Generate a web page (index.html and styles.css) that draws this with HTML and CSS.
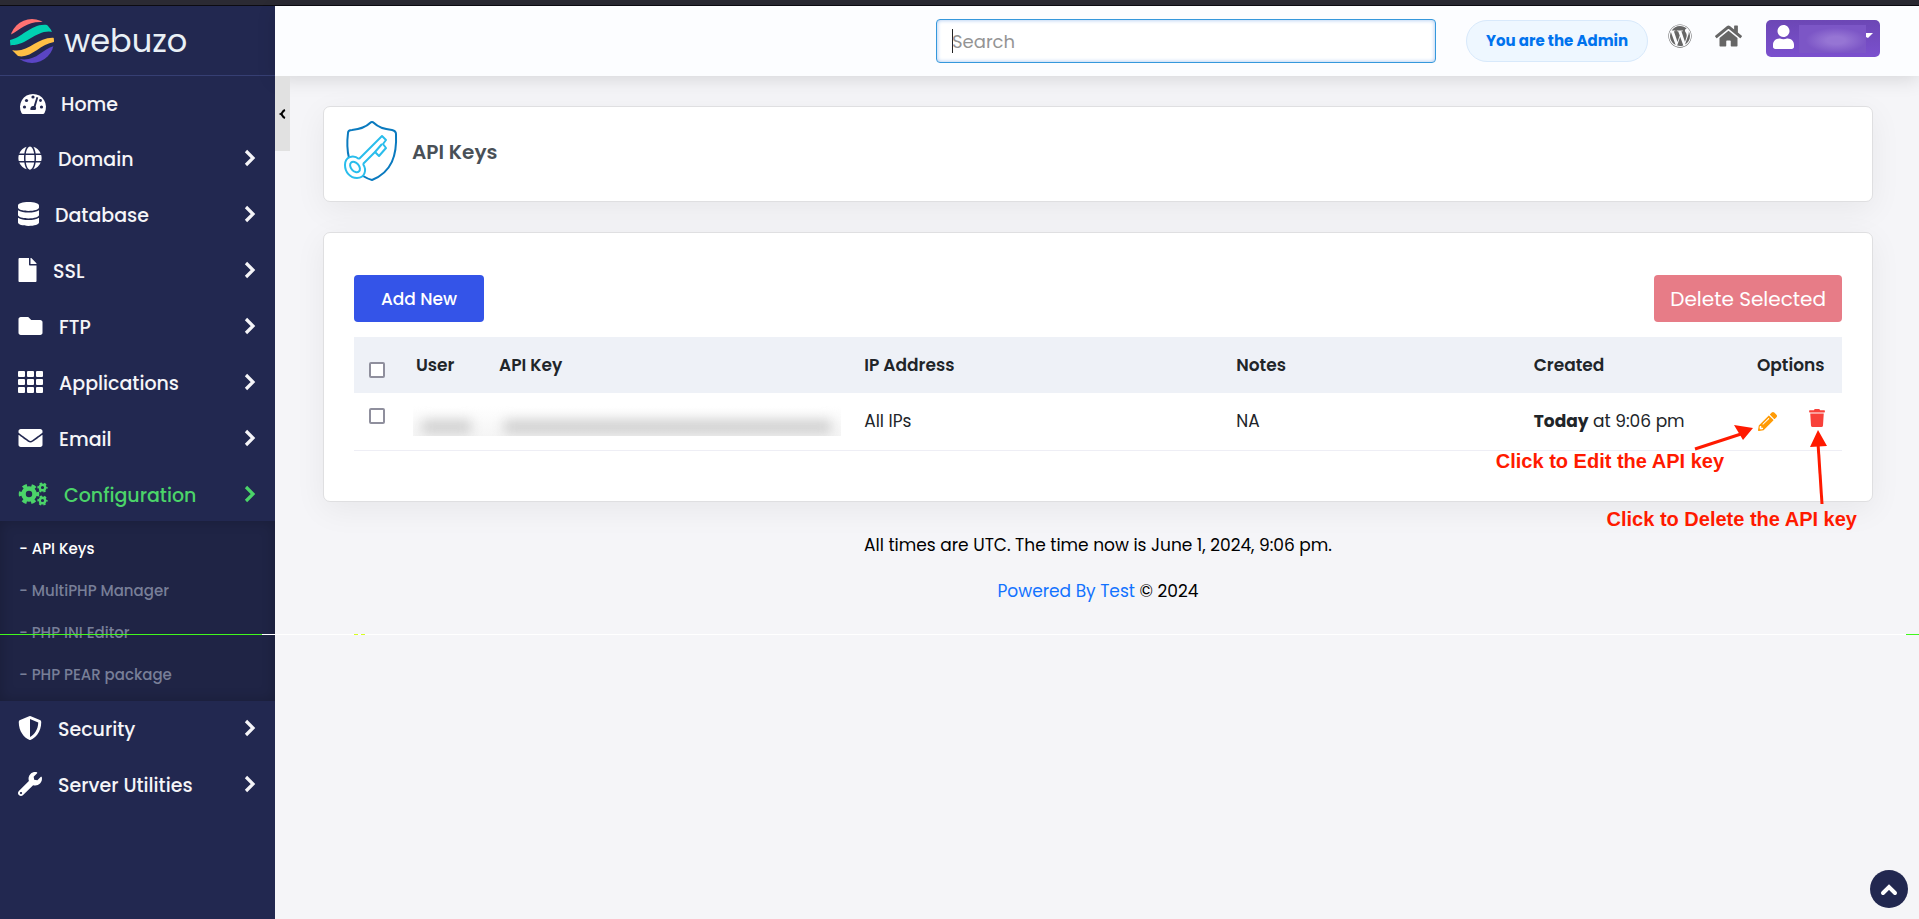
FILE: index.html
```
<!DOCTYPE html>
<html lang="en">
<head>
<meta charset="utf-8">
<title>API Keys</title>
<link rel="stylesheet" href="styles.css">
</head>
<body>
<svg class="defs" aria-hidden="true">
  <symbol id="chev" viewBox="0 0 12 18"><path d="M2 2l7 7-7 7" fill="none" stroke="currentColor" stroke-width="3.2"/></symbol>
  <symbol id="gear" viewBox="-12 -12 24 24">
    <g fill="none" stroke="currentColor"><circle r="6" stroke-width="5"/><circle r="9.2" stroke-width="4" stroke-dasharray="4.8 4.83" stroke-dashoffset="2.4"/></g>
  </symbol>
</svg>
<div class="top-strip"></div>
<div class="app">
  <aside class="sidebar">
    <a class="brand" href="#">
      <svg class="brand-mark" viewBox="0 0 44 44" aria-hidden="true">
        <defs><clipPath id="disc"><circle cx="22" cy="22" r="22"/></clipPath></defs>
        <g clip-path="url(#disc)">
          <path d="M0 16C11 10 17 2 33 3L30-2H0z" fill="#ff7272"/>
          <path d="M-1 21C11 20 22 3 38 6L44 13C27 9 18 26 2 26L-1 27z" fill="#00d1b2"/>
          <path d="M2 31C18 35 28 17 45 19L44 23C30 25 21 40 8 37z" fill="#ffc045"/>
          <path d="M9 40C26 43 31 31 44 27V46H9z" fill="#5a45c4"/>
        </g>
      </svg>
      <span>webuzo</span>
    </a>
    <nav class="nav">
      <a class="item first" href="#"><svg width="28" height="22" viewBox="0 0 28 22"><path fill="#fff" d="M2.500 21A13 13 0 1 1 25.500 21Q25 22 24 22H4Q3 22 2.500 21z"/><g fill="#222850"><circle cx="5.500" cy="15" r="1.600"/><circle cx="7.500" cy="8.500" r="1.600"/><circle cx="14" cy="5" r="1.600"/><circle cx="22.500" cy="15" r="1.600"/><circle cx="21.500" cy="8.500" r="1.400"/><path d="M17.500 5l1.700.6-2.600 9A3 3 0 0 1 16.500 18h-5a3 3 0 0 1 3.200-4z"/></g></svg><span>Home</span></a>
      <a class="item" href="#"><svg width="24" height="24" viewBox="0 0 496 512"><path fill="currentColor" d="M336.5 160C322 70.7 287.8 8 248 8s-74 62.7-88.5 152h177zM152 256c0 22.2 1.2 43.5 3.3 64h185.3c2.100-20.500 3.300-41.800 3.300-64s-1.200-43.500-3.300-64H155.300c-2.100 20.500-3.300 41.800-3.300 64zm324.700-96c-28.600-67.900-86.500-120.400-158-141.600 24.400 33.800 41.200 84.700 50 141.600h108zM177.200 18.400C105.800 39.600 47.800 92.100 19.300 160h108c8.700-56.900 25.500-107.800 49.900-141.600zM487.400 192H372.700c2.100 21 3.300 42.500 3.300 64s-1.200 43-3.300 64h114.600c5.500-20.500 8.600-41.800 8.600-64s-3.100-43.500-8.500-64zM120 256c0-21.500 1.200-43 3.300-64H8.600C3.200 212.500 0 233.800 0 256s3.200 43.500 8.600 64h114.600c-2-21-3.200-42.500-3.200-64zm39.500 96c14.500 89.300 48.700 152 88.500 152s74-62.700 88.500-152h-177zm159.300 141.600c71.400-21.200 129.400-73.700 158-141.600h-108c-8.800 56.900-25.600 107.800-50 141.600zM19.300 352c28.600 67.900 86.500 120.400 158 141.600-24.400-33.800-41.200-84.700-50-141.600h-108z"/></svg><span>Domain</span><svg class="arrow"><use href="#chev"/></svg></a>
      <a class="item" href="#"><svg width="21" height="24" viewBox="0 0 448 512"><path fill="currentColor" d="M448 73.143v45.714C448 159.143 347.667 192 224 192S0 159.143 0 118.857V73.143C0 32.857 100.333 0 224 0s224 32.857 224 73.143zM448 176v102.857C448 319.143 347.667 352 224 352S0 319.143 0 278.857V176c48.125 33.143 136.208 48.572 224 48.572S399.874 209.143 448 176zm0 160v102.857C448 479.143 347.667 512 224 512S0 479.143 0 438.857V336c48.125 33.143 136.208 48.572 224 48.572S399.874 369.143 448 336z"/></svg><span>Database</span><svg class="arrow"><use href="#chev"/></svg></a>
      <a class="item" href="#"><svg width="19" height="24" viewBox="0 0 384 512"><path fill="currentColor" d="M224 136V0H24C10.7 0 0 10.7 0 24v464c0 13.300 10.700 24 24 24h336c13.300 0 24-10.700 24-24V160H248c-13.200 0-24-10.800-24-24zm160-14.100v6.100H256V0h6.100c6.400 0 12.500 2.500 17 7l97.900 98c4.500 4.500 7 10.600 7 16.900z"/></svg><span>SSL</span><svg class="arrow"><use href="#chev"/></svg></a>
      <a class="item" href="#"><svg width="25" height="24" viewBox="0 0 512 512"><path fill="currentColor" d="M464 128H272l-64-64H48C21.490 64 0 85.490 0 112v288c0 26.510 21.490 48 48 48h416c26.510 0 48-21.490 48-48V176c0-26.510-21.490-48-48-48z"/></svg><span>FTP</span><svg class="arrow"><use href="#chev"/></svg></a>
      <a class="item" href="#"><svg width="25" height="22" viewBox="0 0 25 22"><g fill="currentColor"><rect width="7" height="6" rx="1"/><rect x="9" width="7" height="6" rx="1"/><rect x="18" width="7" height="6" rx="1"/><rect y="8" width="7" height="6" rx="1"/><rect x="9" y="8" width="7" height="6" rx="1"/><rect x="18" y="8" width="7" height="6" rx="1"/><rect y="16" width="7" height="6" rx="1"/><rect x="9" y="16" width="7" height="6" rx="1"/><rect x="18" y="16" width="7" height="6" rx="1"/></g></svg><span>Applications</span><svg class="arrow"><use href="#chev"/></svg></a>
      <a class="item" href="#"><svg width="25" height="24" viewBox="0 0 512 512"><path fill="currentColor" d="M502.300 190.800c3.900-3.100 9.700-.2 9.700 4.700V400c0 26.500-21.500 48-48 48H48c-26.500 0-48-21.500-48-48V195.600c0-5 5.700-7.800 9.700-4.700 22.400 17.400 52.100 39.500 154.100 113.600 21.100 15.400 56.700 47.800 92.200 47.600 35.700.3 72-32.800 92.300-47.600 102-74.100 131.600-96.300 154-113.700zM256 320c23.200.4 56.600-29.200 73.400-41.400 132.700-96.300 142.800-104.700 173.400-128.700 5.800-4.500 9.200-11.500 9.200-18.900v-19c0-26.500-21.500-48-48-48H48c-26.500 0-48 21.500-48 48v19c0 7.400 3.400 14.300 9.200 18.900 30.600 23.900 40.700 32.400 173.400 128.700 16.800 12.200 50.200 41.800 73.400 41.400z"/></svg><span>Email</span><svg class="arrow"><use href="#chev"/></svg></a>
      <a class="item active" href="#"><svg width="30" height="24" viewBox="0 0 30 24"><use href="#gear" x="0" y="1" width="22" height="22"/><use href="#gear" x="19" y="0" width="11" height="11"/><use href="#gear" x="19" y="13" width="11" height="11"/></svg><span>Configuration</span><svg class="arrow"><use href="#chev"/></svg></a>
      <div class="sub">
        <a class="current" href="#">- API Keys</a>
        <a href="#">- MultiPHP Manager</a>
        <a href="#">- PHP INI Editor</a>
        <a href="#">- PHP PEAR package</a>
      </div>
      <a class="item" href="#"><svg width="24" height="24" viewBox="0 0 512 512"><path fill="currentColor" d="M466.500 83.700l-192-80a48.150 48.150 0 0 0-36.900 0l-192 80C27.700 91.100 16 108.600 16 128c0 198.500 114.500 335.700 221.500 380.300 11.800 4.900 25.100 4.900 36.900 0C360.100 472.600 496 349.300 496 128c0-19.400-11.700-36.900-29.500-44.300zM256.100 446.300l-.1-381 175.900 73.300c-3.300 151.400-82.100 261.100-175.800 307.700z"/></svg><span>Security</span><svg class="arrow"><use href="#chev"/></svg></a>
      <a class="item" href="#"><svg width="24" height="24" viewBox="0 0 512 512"><path fill="currentColor" d="M507.730 109.100c-2.240-9.030-13.540-12.090-20.120-5.510l-74.360 74.360-67.880-11.310-11.310-67.880 74.360-74.360c6.620-6.620 3.430-17.900-5.660-20.160-47.380-11.740-99.550.91-136.580 37.930-39.640 39.640-50.550 97.100-34.050 147.200L18.740 402.760c-24.990 24.990-24.990 65.510 0 90.500 24.990 24.990 65.510 24.990 90.500 0l213.210-213.210c50.120 16.710 107.470 5.680 147.370-34.220 37.070-37.070 49.700-89.320 37.910-136.730zM64 472c-13.250 0-24-10.750-24-24 0-13.260 10.750-24 24-24s24 10.740 24 24c0 13.250-10.750 24-24 24z"/></svg><span>Server Utilities</span><svg class="arrow"><use href="#chev"/></svg></a>
    </nav>
  </aside>
  <div class="page">
    <header class="header">
      <input class="search" type="text" placeholder="Search" aria-label="Search">
      <span class="role">You are the Admin</span>
      <a class="tool wp" href="#" aria-label="WordPress"><svg width="24" height="24" viewBox="0 0 512 512"><path fill="currentColor" d="M61.700 169.400l101.500 278C92.200 413 43.300 340.200 43.300 256c0-30.900 6.600-60.100 18.400-86.600zm337.900 75.900c0-26.300-9.400-44.500-17.500-58.700-10.800-17.500-20.900-32.400-20.900-49.900 0-19.600 14.800-37.800 35.700-37.800.9 0 1.800.1 2.800.2-37.900-34.700-88.300-55.900-143.700-55.900-74.300 0-139.700 38.100-177.800 95.900 5 .2 9.700.3 13.700.3 22.200 0 56.700-2.700 56.700-2.700 11.500-.7 12.800 16.200 1.400 17.500 0 0-11.500 1.300-24.300 2l77.500 230.400L249.800 247l-33.100-90.800c-11.500-.7-22.300-2-22.300-2-11.500-.7-10.100-18.200 1.300-17.500 0 0 35.100 2.700 56 2.700 22.200 0 56.700-2.700 56.700-2.700 11.500-.7 12.800 16.200 1.400 17.500 0 0-11.500 1.300-24.300 2l76.900 228.700 21.200-70.900c9-29.400 16-50.500 16-68.700zm-139.900 29.300l-63.800 185.500c19.100 5.600 39.200 8.700 60.100 8.700 24.800 0 48.500-4.300 70.600-12.100-.6-.9-1.100-1.900-1.500-2.900l-65.400-179.200zm183-120.700c.9 6.800 1.400 14 1.400 21.900 0 21.600-4 45.800-16.200 76.200l-65 187.900C426.200 403 468.700 334.500 468.700 256c0-37-9.400-71.800-26-102.100zM504 256c0 136.800-111.300 248-248 248C119.200 504 8 392.700 8 256 8 119.200 119.200 8 256 8c136.700 0 248 111.200 248 248zm-11.400 0c0-130.500-106.200-236.600-236.600-236.600C125.500 19.400 19.400 125.500 19.400 256S125.600 492.600 256 492.600c130.500 0 236.600-106.100 236.600-236.600z"/></svg></a>
      <a class="tool" href="#" aria-label="Home"><svg width="27" height="24" viewBox="0 0 576 512"><path fill="currentColor" d="M280.370 148.260L96 300.110V464a16 16 0 0 0 16 16l112.060-.29a16 16 0 0 0 15.920-16V368a16 16 0 0 1 16-16h64a16 16 0 0 1 16 16v95.640a16 16 0 0 0 16 16.050L464 480a16 16 0 0 0 16-16V300L295.670 148.260a12.190 12.190 0 0 0-15.300 0zM571.600 251.470L488 182.560V44.050a12 12 0 0 0-12-12h-56a12 12 0 0 0-12 12v72.610L318.470 43a48 48 0 0 0-61 0L4.340 251.470a12 12 0 0 0-1.600 16.900l25.500 31A12 12 0 0 0 45.150 301l235.220-193.740a12.190 12.190 0 0 1 15.300 0L530.900 301a12 12 0 0 0 16.900-1.600l25.500-31a12 12 0 0 0-1.700-16.930z"/></svg></a>
      <button class="account" type="button" aria-label="Account"><svg width="21" height="24" viewBox="0 0 448 512"><path fill="#fff" d="M224 256c70.700 0 128-57.300 128-128S294.700 0 224 0 96 57.300 96 128s57.300 128 128 128zm89.600 32h-16.700c-22.200 10.200-46.900 16-72.900 16s-50.600-5.800-72.900-16h-16.700C60.200 288 0 348.200 0 422.400V464c0 26.500 21.500 48 48 48h352c26.500 0 48-21.500 48-48v-41.600c0-74.200-60.200-134.400-134.400-134.400z"/></svg><span class="account-name"></span><svg class="caret" width="7" height="5" viewBox="0 0 7 5"><path d="M0 0h7L2 5 0 4z" fill="#fff"/></svg></button>
    </header>
    <button class="collapse" type="button" aria-label="Collapse menu"><svg width="6" height="10" viewBox="0 0 6 10"><path d="M5 1C2 2 3 4 1 5c2 1 1 3 4 4" fill="none" stroke="#000" stroke-width="2"/></svg></button>
    <main class="main">
      <section class="card title-card">
        <svg width="53" height="60" viewBox="0 0 53 60" aria-hidden="true">
          <g fill="none" stroke-width="2" stroke-linejoin="round">
            <path d="M5 37C3 29 3 20 4 12Q4 9 8 9C17 8 22 6 26 2Q28 0 30 2C34 6 38 8 48 9Q52 10 52 13C53 34 48 51 28 59Q24 58 19 55" stroke="#0a7abf"/>
            <g stroke="#29bdec"><path d="M15 38L38 15l4 4-3 4 3 4-7 8-4-4-12 12"/><path d="M31 31l7-8M19 43c4 6 2 14-6 14C6 57 1 51 1 44c0-8 8-11 14-6"/><ellipse cx="11" cy="46" rx="4" ry="6" transform="rotate(-40 11 46)"/></g>
          </g>
        </svg>
        <h1>API Keys</h1>
      </section>
      <section class="card list-card">
        <div class="actions">
          <button class="btn add" type="button">Add New</button>
          <button class="btn delete" type="button">Delete Selected</button>
        </div>
        <table class="keys">
          <colgroup><col class="c-check"><col class="c-user"><col class="c-key"><col class="c-ip"><col class="c-notes"><col class="c-created"><col class="c-options"></colgroup>
          <thead><tr><th class="pick"><input type="checkbox" aria-label="Select all"></th><th>User</th><th>API Key</th><th>IP Address</th><th>Notes</th><th>Created</th><th>Options</th></tr></thead>
          <tbody><tr>
            <td class="pick"><input type="checkbox" aria-label="Select key"></td>
            <td colspan="2" class="masked"><div class="mask"><i class="smudge user"></i><i class="smudge key"></i></div></td>
            <td>All IPs</td><td>NA</td><td><b>Today</b> at 9:06 pm</td>
            <td><div class="options">
              <a class="edit" href="#" aria-label="Edit"><svg width="19" height="19" viewBox="0 0 512 512"><path fill="currentColor" d="M497.900 142.100l-46.100 46.100c-4.700 4.700-12.300 4.700-17 0l-111-111c-4.700-4.700-4.700-12.300 0-17l46.100-46.100c18.700-18.700 49.100-18.700 67.900 0l60.100 60.100c18.800 18.700 18.800 49.100 0 67.900zM284.200 99.800L21.600 362.400.4 483.900c-2.900 16.400 11.400 30.600 27.800 27.800l121.500-21.300 262.600-262.600c4.700-4.700 4.700-12.300 0-17l-111-111c-4.800-4.700-12.400-4.700-17.100 0zM124.100 339.900c-5.500-5.500-5.500-14.300 0-19.800l154-154c5.500-5.500 14.300-5.500 19.800 0s5.500 14.300 0 19.800l-154 154c-5.500 5.500-14.300 5.500-19.800 0zM88 424h48v36.300l-64.500 11.300-31.100-31.100L51.700 376H88v48z"/></svg></a>
              <a class="remove" href="#" aria-label="Delete"><svg width="16" height="18" viewBox="0 0 448 512"><path fill="currentColor" d="M432 32H312l-9.400-18.700A24 24 0 0 0 281.100 0H166.800a23.720 23.720 0 0 0-21.400 13.300L136 32H16A16 16 0 0 0 0 48v32a16 16 0 0 0 16 16h416a16 16 0 0 0 16-16V48a16 16 0 0 0-16-16zM53.200 467a48 48 0 0 0 47.900 45h245.800a48 48 0 0 0 47.900-45L416 128H32z"/></svg></a>
            </div></td>
          </tr></tbody>
        </table>
        <span class="note note-edit">Click to Edit the API key</span>
        <span class="note note-delete">Click to Delete the API key</span>
        <svg class="pointers" width="140" height="80" viewBox="0 0 140 80" aria-hidden="true"><g stroke="#ff1a00" stroke-width="3" fill="#ff1a00"><path d="M4 20L50 5"/><path d="M131 75L127 14"/><path stroke="none" d="M62-1L43-4l9 15zM127 1l-8 17 17-1z"/></g></svg>
      </section>
      <footer class="footer">
        <p>All times are UTC. The time now is June 1, 2024, 9:06 pm.</p>
        <p><a href="#">Powered By Test</a> © 2024</p>
      </footer>
    </main>
  </div>
</div>
<div class="scanline"></div>
<button class="to-top" type="button" aria-label="Back to top"><svg width="16" height="11" viewBox="0 0 16 11"><path d="M2 9l6-6 6 6" fill="none" stroke="#fff" stroke-width="4" stroke-linecap="round"/></svg></button>
</body>
</html>
```
FILE: styles.css
```
* { box-sizing: border-box; }
body {
  margin: 0;
  min-height: 100vh;
  display: flex;
  flex-direction: column;
  background: #f5f5f8;
  color: #212529;
  font-family: Poppins, Inter, "Open Sans", sans-serif;
  font-size: 17px;
  line-height: 24px;
}
a { color: inherit; text-decoration: none; }
button, input { font: inherit; }
svg { display: block; flex: none; overflow: visible; }
.defs { position: absolute; width: 0; height: 0; }

.top-strip { height: 6px; background: #2b2a33; border-bottom: 1px solid #0c0b12; }
.app { flex: 1; display: flex; }

.sidebar { width: 275px; flex: none; background: #222850; color: #f5f5f8; }
.brand {
  display: flex;
  align-items: center;
  gap: 10px;
  height: 70px;
  padding: 0 10px;
  border-bottom: 1px solid #363f73;
  color: #e9f0f6;
  font-size: 32px;
  line-height: 40px;
}
.brand-mark { width: 44px; height: 44px; }

.nav { font-size: 19px; font-weight: 500; }
.item { display: flex; align-items: center; gap: 16px; height: 56px; padding: 2px 19px 0 18px; }
.item > svg { margin-bottom: 4px; }
.item > svg:first-child { color: #fff; }
.item.first { height: 55px; gap: 14px; padding-left: 19px; }
.item .arrow { width: 12px; height: 18px; margin-left: auto; }
.item.active { height: 54px; padding-top: 4px; }
.item.active, .item.active > svg { color: #4bd469; }
.sub {
  display: grid;
  padding: 7px 19px 5px;
  background: #1f2445;
  box-shadow: inset 0 0 14px rgba(0, 0, 0, .2);
  color: #787f98;
  font-size: 15px;
}
.sub a { padding: 9px 0; }
.sub .current { color: #fff; }

.page { flex: 1; min-width: 0; position: relative; }
.header {
  display: flex;
  align-items: flex-start;
  justify-content: flex-end;
  height: 70px;
  padding: 14px 39px 0 48px;
  background: #fcfdff;
  box-shadow: 0 4px 18px rgba(0, 0, 0, .12);
}
.search {
  width: 500px;
  height: 44px;
  margin: -1px 30px 0 0;
  padding: 0 15px;
  border: 1px solid #3598dc;
  border-radius: 4px;
  background: linear-gradient(#222, #222) 15px 9px / 1px 24px no-repeat #fff;
  box-shadow: inset 0 0 4px #9dc0ee;
  color: #222;
  font-size: 18px;
}
.search::placeholder { color: #949494; opacity: 1; }
.role {
  width: 182px;
  margin-right: 20px;
  padding: 8px 0;
  border: 1px solid #d8e9fb;
  border-radius: 21px;
  background: #eef7ff;
  color: #0073ee;
  text-align: center;
  font-size: 15px;
  font-weight: 700;
}
.tool { margin: 4px 24px 0 0; color: #666; }
.tool.wp { margin-right: 23px; }
.account {
  display: flex;
  align-items: center;
  gap: 5px;
  width: 114px;
  height: 37px;
  padding: 0 7px 4px;
  border: 0;
  border-radius: 5px;
  background: linear-gradient(#6c47b5, #7b50ce);
}
.account-name { width: 68px; height: 28px; margin: 5px -5px 0 0; background: radial-gradient(closest-side at 55% 55%, #9675d4 30%, #7c56c6); }
.caret { margin-bottom: 3px; }

.collapse {
  position: absolute;
  left: 0;
  top: 70px;
  display: grid;
  place-items: center;
  width: 15px;
  height: 75px;
  padding: 0;
  border: 0;
  background: #e1e1e1;
}

.main { padding: 30px 46px 0 48px; }
.card {
  border: 1px solid #dfdfe1;
  border-radius: 7px;
  background: #fff;
  box-shadow: 0 8px 32px rgba(0, 0, 0, .06);
}
.title-card { display: flex; align-items: center; gap: 15px; margin-bottom: 30px; padding: 14px 20px 20px; }
.title-card h1 { margin: 2px 0 0; color: #495057; font-size: 20px; font-weight: 600; line-height: 24px; }
.list-card { position: relative; padding: 42px 30px 50px; }
.actions { display: flex; justify-content: space-between; margin-bottom: 15px; }
.btn { height: 47px; border: 0; border-radius: 4px; color: #fff; }
.add { width: 130px; background: #3454e8; font-weight: 500; }
.delete { padding: 0 16px; background: #e77c87; font-size: 20px; }

.keys { width: 100%; table-layout: fixed; border-collapse: collapse; }
.c-check { width: 50px; }
.c-user { width: 83px; }
.c-ip { width: 25%; }
.c-notes { width: 20%; }
.c-created { width: 15%; }
.c-options { width: 97px; }
.keys th, .keys td { height: 56px; padding: 0 12px; text-align: left; white-space: nowrap; }
.keys thead { background: #eef1f7; }
.keys th { font-weight: 600; }
.keys td { height: 57px; border-bottom: 1px solid #eeeef5; }
.keys .pick { padding: 0 15px; }
.keys input {
  display: block;
  appearance: none;
  width: 16px;
  height: 16px;
  margin: 0;
  border: 2px solid #8f8f9d;
  border-radius: 2px;
  background: #fff;
}
.keys th input { margin-top: 10px; }
.keys td input { margin-bottom: 10px; }
.keys .masked { padding: 0 11px 0 9px; }
.mask { position: relative; height: 30px; overflow: hidden; background: linear-gradient(#fff, #f5f5f5); }
.smudge { position: absolute; top: 14px; height: 14px; background: #d0d0d0; filter: blur(6px); }
.smudge.user { left: 9px; width: 49px; }
.smudge.key { left: 91px; right: 10px; }
.options { display: flex; align-items: center; gap: 32px; padding-left: 1px; }
.edit { color: #ff9b05; }
.remove { margin-bottom: 6px; color: #f8413a; }

.note {
  position: absolute;
  color: #ff1a00;
  font-family: "Liberation Sans", Arial, sans-serif;
  font-size: 20px;
  font-weight: 700;
  white-space: nowrap;
}
.note-edit { right: 148px; bottom: 28px; }
.note-delete { right: 15px; bottom: -30px; }
.pointers { position: absolute; right: 41px; bottom: -8px; }

.footer { padding-top: 31px; text-align: center; color: #000; }
.footer p { margin: 0 0 22px; }
.footer a { color: #1272ff; }

.scanline {
  position: absolute;
  left: 0;
  right: 0;
  top: 634px;
  height: 1px;
  background: linear-gradient(90deg, #41f91c 262px, #fff 262px 354px, #d8ff20 354px 358px, #fff 358px 361px, #d8ff20 361px 365px, #fff 365px calc(100% - 13px), #41f91c calc(100% - 13px));
}
.to-top {
  position: fixed;
  right: 11px;
  bottom: 11px;
  display: grid;
  place-items: center;
  width: 38px;
  height: 38px;
  padding: 0;
  border: 0;
  border-radius: 50%;
  background: #222850;
}
```
